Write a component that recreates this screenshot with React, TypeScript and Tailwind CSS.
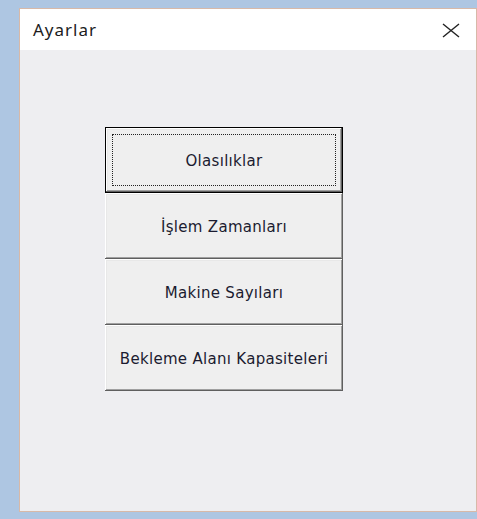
import React from "react";

const bevel =
  "shadow-[inset_-1px_-1px_0_#5f5f5f,inset_1px_1px_0_#ffffff,inset_-2px_-2px_0_#a0a0a0,inset_2px_2px_0_#e8e8e8]";

const labelCls = "pt-[3px] text-[15px] tracking-[0.3px] text-[#1b1b30]";

function ClassicButton({ label, focused = false }: { label: string; focused?: boolean }) {
  if (focused) {
    return (
      <button className="h-[66px] w-[238px] border border-black bg-[#efefef] p-0">
        <div className={`h-full w-full p-[6px] ${bevel}`}>
          <div className="flex h-full w-full items-center justify-center border border-dotted border-[#222]">
            <span className={labelCls}>{label}</span>
          </div>
        </div>
      </button>
    );
  }
  return (
    <button className={`flex h-[66px] w-[238px] items-center justify-center bg-[#efefef] ${bevel}`}>
      <span className={labelCls}>{label}</span>
    </button>
  );
}

export default function App() {
  return (
    <div className="h-[519px] w-[477px] overflow-hidden bg-[#aec6e2] pl-[19px] pt-[8px]">
      <div className="flex h-[504px] w-[458px] flex-col border border-[#d8b9a8] bg-[#eeeef1]">
        <div className="flex h-[41px] items-center justify-between bg-white pl-[13px] pr-[16px]">
          <span
            className="text-[17px] tracking-[1px] text-[#1c1c1c]"
            style={{ fontFamily: '"Noto Sans", sans-serif' }}
          >
            Ayarlar
          </span>
          <svg width="18" height="15" viewBox="0 0 18 15" className="mt-[1px]">
            <path d="M1 1 L17 14 M17 1 L1 14" stroke="#222" strokeWidth="1.4" fill="none" />
          </svg>
        </div>
        <div
          className="flex flex-col pl-[85px] pt-[77px]"
          style={{ fontFamily: '"DejaVu Sans", sans-serif' }}
        >
          <ClassicButton label="Olasılıklar" focused />
          <ClassicButton label="İşlem Zamanları" />
          <ClassicButton label="Makine Sayıları" />
          <ClassicButton label="Bekleme Alanı Kapasiteleri" />
        </div>
      </div>
    </div>
  );
}
